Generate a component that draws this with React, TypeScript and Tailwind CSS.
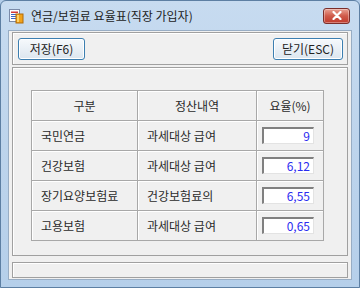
import React from 'react';

const rows = [
  { name: '국민연금', base: '과세대상 급여', rate: '9' },
  { name: '건강보험', base: '과세대상 급여', rate: '6,12' },
  { name: '장기요양보험료', base: '건강보험료의', rate: '6,55' },
  { name: '고용보험', base: '과세대상 급여', rate: '0,65' },
];

const font = { fontFamily: '"Noto Sans CJK KR", "Noto Sans", sans-serif' };

// 타이틀바 아이콘
const AppIcon = () => (
  <svg width="16" height="16" viewBox="0 0 16 16">
    <rect x="1.5" y="1.5" width="10" height="12" fill="#fff" stroke="#7a8aa8" />
    <rect x="3" y="3.5" width="7" height="1.5" fill="#d23a3a" />
    <rect x="3" y="6" width="7" height="1" fill="#3b66c4" />
    <rect x="3" y="8" width="7" height="1" fill="#3b66c4" />
    <rect x="3" y="10" width="5" height="1" fill="#3b66c4" />
    <rect x="8" y="6" width="7" height="9" fill="#f1a21b" stroke="#b06a08" />
    <rect x="9" y="7" width="2" height="7" fill="#fcd36a" />
  </svg>
);

const CloseButton = () => (
  <div className="w-[27px] h-[16px] rounded-[3px] border border-[#7b2e2a] bg-gradient-to-b from-[#e8a093] via-[#cf5a4a] to-[#c0392b] flex items-center justify-center shadow-[inset_0_0_0_1px_rgba(255,255,255,0.35)]">
    <svg width="10" height="9" viewBox="0 0 10 9">
      <path d="M1.5 1 L8.5 8 M8.5 1 L1.5 8" stroke="#fff" strokeWidth="2.2" strokeLinecap="round" />
    </svg>
  </div>
);

const ToolButton = ({ label, width }: { label: string; width: string }) => (
  <button
    className={`${width} h-[22px] rounded-[3px] border border-[#3c7fb1] bg-gradient-to-b from-[#f6f9fc] to-[#dce6ef] text-[12px] text-[#222] leading-none shadow-[inset_0_0_0_1px_#fff]`}
    style={font}
  >
    {label}
  </button>
);

export default function App() {
  return (
    <div className="w-[360px] h-[288px] overflow-hidden bg-[#b3cde9]" style={font}>
      <div className="w-full h-full rounded-t-[6px] border border-[#5d7fa3] bg-gradient-to-b from-[#c7dbf0] via-[#bdd4ec] to-[#b5cfea] flex flex-col">
        {/* 타이틀바 */}
        <div className="h-[29px] flex items-center pl-[7px] pr-[9px] shrink-0">
          <AppIcon />
          <span className="ml-[7px] mt-[1px] text-[12px] text-[#222] leading-none">연금/보험료 요율표(직장 가입자)</span>
          <div className="ml-auto">
            <CloseButton />
          </div>
        </div>

        {/* 클라이언트 영역 */}
        <div className="mx-[7px] h-[250px] bg-[#f0f0f0] border border-[#98adc4] px-[3px] pt-[1px] flex flex-col">
          {/* 버튼 패널 */}
          <div className="h-[33px] border border-[#a0a0a0] shadow-[inset_1px_1px_0_#fff] flex items-center justify-between pl-[5px] pr-[4px]">
            <ToolButton label="저장(F6)" width="w-[67px]" />
            <ToolButton label="닫기(ESC)" width="w-[70px]" />
          </div>

          {/* 메인 패널 */}
          <div className="mt-[2px] h-[189px] border border-[#a0a0a0] shadow-[inset_1px_1px_0_#fff] pl-[18px] pt-[22px]">
            <table className="border-collapse text-[12px] text-[#2a2a2a]">
              <thead>
                <tr className="h-[30px]">
                  <th className="w-[106px] font-normal border border-[#a8a8a8] shadow-[inset_1px_1px_0_#fff]">구분</th>
                  <th className="w-[119px] font-normal border border-[#a8a8a8] shadow-[inset_1px_1px_0_#fff]">정산내역</th>
                  <th className="w-[67px] font-normal border border-[#a8a8a8] shadow-[inset_1px_1px_0_#fff]">요율(%)</th>
                </tr>
              </thead>
              <tbody>
                {rows.map((r) => (
                  <tr key={r.name} className="h-[30px]">
                    <td className="pl-[9px] border border-[#a8a8a8] shadow-[inset_1px_1px_0_#fff]">{r.name}</td>
                    <td className="pl-[9px] border border-[#a8a8a8] shadow-[inset_1px_1px_0_#fff]">{r.base}</td>
                    <td className="border border-[#a8a8a8] shadow-[inset_1px_1px_0_#fff]">
                      <div className="ml-[5px] w-[52px] h-[17px] bg-white border-t-2 border-l-2 border-t-[#808080] border-l-[#808080] border-r border-b border-r-[#e3e3e3] border-b-[#e3e3e3] flex items-center justify-end pr-[3px] text-[12px] text-[#2b2bf0] leading-none">
                        {r.rate}
                      </div>
                    </td>
                  </tr>
                ))}
              </tbody>
            </table>
          </div>

          {/* 상태바 */}
          <div className="mt-[6px] h-[16px] border border-[#a0a0a0] shadow-[inset_1px_1px_0_#fff]" />
        </div>
      </div>
    </div>
  );
}
